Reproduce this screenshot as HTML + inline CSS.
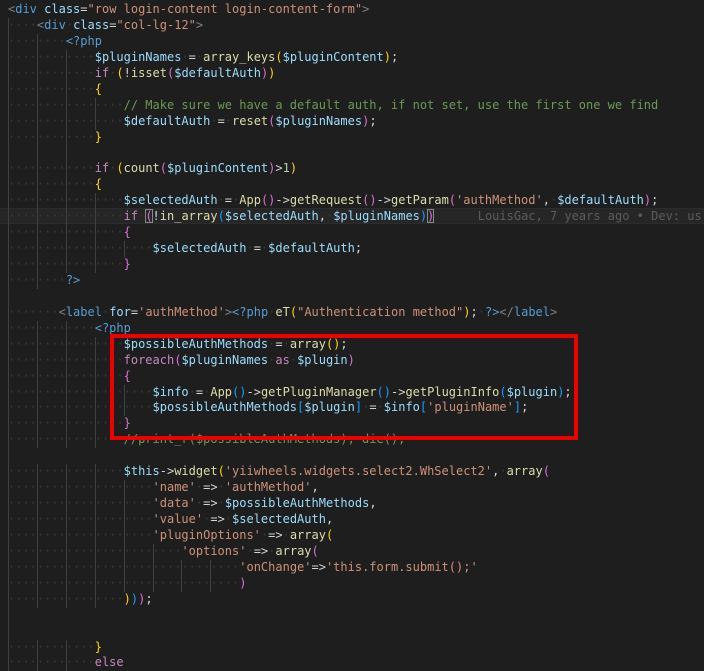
<!DOCTYPE html>
<html><head><meta charset="utf-8">
<style>
html,body{margin:0;padding:0;background:#1e1e1e;width:704px;height:663px;overflow:hidden}
#ed{position:absolute;left:8px;top:2px;font-family:"DejaVu Sans Mono","Liberation Mono",monospace;font-size:12px;line-height:15.95px;color:#d4d4d4}
.l{height:15.95px;position:relative;white-space:pre}
.g{display:inline-block;box-shadow:inset 1px 0 0 #404040;color:#3a3a3a}
.d{color:#3a3a3a}
.t{color:#808080}.tn{color:#569cd6}.a{color:#9cdcfe}.s{color:#ce9178}.v{color:#9cdcfe}.f{color:#dcdcaa}.k{color:#c586c0}.p{color:#569cd6}.c{color:#6a9955}
.y{color:#ffd700}.m{color:#da70d6}.b{color:#179fff}
.bx{outline:1px solid #888;outline-offset:-1px}
.cur{position:absolute;left:0;top:208px;width:704px;height:16px;background:#262626;border-top:1px solid #2c2c2c;border-bottom:1px solid #2c2c2c;box-sizing:border-box}
.blame{color:#5c5c5c}
#red{position:absolute;left:110px;top:334px;width:468px;height:106px;border:4px solid #ee0000;box-sizing:border-box}
</style></head><body>
<div class="cur"></div>
<div id="ed">
<div class="l"><span class="t">&lt;</span><span class="tn">div</span> <span class="a">class</span>=<span class="s">"row login-content login-content-form"</span><span class="t">&gt;</span></div>
<div class="l"><span class="g">····</span><span class="t">&lt;</span><span class="tn">div</span><span class="d">·</span><span class="a">class</span>=<span class="s">"col-lg-12"</span><span class="t">&gt;</span></div>
<div class="l"><span class="g">····</span><span class="g">····</span><span class="p">&lt;?php</span></div>
<div class="l"><span class="g">····</span><span class="g">····</span><span class="g">····</span><span class="v">$pluginNames</span><span class="d">·</span>=<span class="d">·</span><span class="f">array_keys</span><span class="y">(</span><span class="v">$pluginContent</span><span class="y">)</span>;</div>
<div class="l"><span class="g">····</span><span class="g">····</span><span class="g">····</span><span class="k">if</span><span class="d">·</span><span class="y">(</span>!<span class="f">isset</span><span class="m">(</span><span class="v">$defaultAuth</span><span class="m">)</span><span class="y">)</span></div>
<div class="l"><span class="g">····</span><span class="g">····</span><span class="g">····</span><span class="y">{</span></div>
<div class="l"><span class="g">····</span><span class="g">····</span><span class="g">····</span><span class="g">····</span><span class="c">// Make sure we have a default auth, if not set, use the first one we find</span></div>
<div class="l"><span class="g">····</span><span class="g">····</span><span class="g">····</span><span class="g">····</span><span class="v">$defaultAuth</span><span class="d">·</span>=<span class="d">·</span><span class="f">reset</span><span class="m">(</span><span class="v">$pluginNames</span><span class="m">)</span>;</div>
<div class="l"><span class="g">····</span><span class="g">····</span><span class="g">····</span><span class="y">}</span></div>
<div class="l"><span class="g">    </span><span class="g">    </span><span class="g">    </span></div>
<div class="l"><span class="g">····</span><span class="g">····</span><span class="g">····</span><span class="k">if</span><span class="d">·</span><span class="y">(</span><span class="f">count</span><span class="m">(</span><span class="v">$pluginContent</span><span class="m">)</span>&gt;<span style="color:#b5cea8">1</span><span class="y">)</span></div>
<div class="l"><span class="g">····</span><span class="g">····</span><span class="g">····</span><span class="y">{</span></div>
<div class="l"><span class="g">····</span><span class="g">····</span><span class="g">····</span><span class="g">····</span><span class="v">$selectedAuth</span><span class="d">·</span>=<span class="d">·</span><span class="f">App</span><span class="m">()</span>-&gt;<span class="f">getRequest</span><span class="m">()</span>-&gt;<span class="f">getParam</span><span class="m">(</span><span class="s">'authMethod'</span>,<span class="d">·</span><span class="v">$defaultAuth</span><span class="m">)</span>;</div>
<div class="l"><span class="g">····</span><span class="g">····</span><span class="g">····</span><span class="g">····</span><span class="k">if</span><span class="d">·</span><span class="m bx">(</span>!<span class="f">in_array</span><span class="b">(</span><span class="v">$selectedAuth</span>,<span class="d">·</span><span class="v">$pluginNames</span><span class="b">)</span><span class="m bx">)</span><span class="blame">      LouisGac, 7 years ago • Dev: us</span></div>
<div class="l"><span class="g">····</span><span class="g">····</span><span class="g">····</span><span class="g">····</span><span class="m">{</span></div>
<div class="l"><span class="g">····</span><span class="g">····</span><span class="g">····</span><span class="g">····</span><span class="g">····</span><span class="v">$selectedAuth</span><span class="d">·</span>=<span class="d">·</span><span class="v">$defaultAuth</span>;</div>
<div class="l"><span class="g">····</span><span class="g">····</span><span class="g">····</span><span class="g">····</span><span class="m">}</span></div>
<div class="l"><span class="g">····</span><span class="g">····</span><span class="p">?&gt;</span></div>
<div class="l"><span class="g">    </span></div>
<div class="l"><span class="g">····</span><span class="d">···</span><span class="t">&lt;</span><span class="tn">label</span><span class="d">·</span><span class="a">for</span>=<span class="s">'authMethod'</span><span class="t">&gt;</span><span class="p">&lt;?php</span><span class="d">·</span><span class="f">eT</span><span class="y">(</span><span class="s">"Authentication method"</span><span class="y">)</span>;<span class="d">·</span><span class="p">?&gt;</span><span class="t">&lt;/</span><span class="tn">label</span><span class="t">&gt;</span></div>
<div class="l"><span class="g">····</span><span class="g">····</span><span class="g">····</span><span class="p">&lt;?php</span></div>
<div class="l"><span class="g">····</span><span class="g">····</span><span class="g">····</span><span class="g">····</span><span class="v">$possibleAuthMethods</span><span class="d">·</span>=<span class="d">·</span><span class="f">array</span><span class="y">()</span>;</div>
<div class="l"><span class="g">····</span><span class="g">····</span><span class="g">····</span><span class="g">····</span><span class="k">foreach</span><span class="m">(</span><span class="v">$pluginNames</span><span class="d">·</span><span class="k">as</span><span class="d">·</span><span class="v">$plugin</span><span class="m">)</span></div>
<div class="l"><span class="g">····</span><span class="g">····</span><span class="g">····</span><span class="g">····</span><span class="m">{</span></div>
<div class="l"><span class="g">····</span><span class="g">····</span><span class="g">····</span><span class="g">····</span><span class="g">····</span><span class="v">$info</span><span class="d">·</span>=<span class="d">·</span><span class="f">App</span><span class="b">()</span>-&gt;<span class="f">getPluginManager</span><span class="b">()</span>-&gt;<span class="f">getPluginInfo</span><span class="b">(</span><span class="v">$plugin</span><span class="b">)</span>;</div>
<div class="l"><span class="g">····</span><span class="g">····</span><span class="g">····</span><span class="g">····</span><span class="g">····</span><span class="v">$possibleAuthMethods</span><span class="b">[</span><span class="v">$plugin</span><span class="b">]</span><span class="d">·</span>=<span class="d">·</span><span class="v">$info</span><span class="b">[</span><span class="s">'pluginName'</span><span class="b">]</span>;</div>
<div class="l"><span class="g">····</span><span class="g">····</span><span class="g">····</span><span class="g">····</span><span class="m">}</span></div>
<div class="l"><span class="g">····</span><span class="g">····</span><span class="g">····</span><span class="g">····</span><span class="c">//print_r($possibleAuthMethods); die();</span></div>
<div class="l"><span class="g">    </span></div>
<div class="l"><span class="g">····</span><span class="g">····</span><span class="g">····</span><span class="g">····</span><span class="v">$this</span>-&gt;<span class="f">widget</span><span class="y">(</span><span class="s">'yiiwheels.widgets.select2.WhSelect2'</span>,<span class="d">·</span><span class="f">array</span><span class="m">(</span></div>
<div class="l"><span class="g">····</span><span class="g">····</span><span class="g">····</span><span class="g">····</span><span class="g">····</span><span class="s">'name'</span><span class="d">·</span>=&gt;<span class="d">·</span><span class="s">'authMethod'</span>,</div>
<div class="l"><span class="g">····</span><span class="g">····</span><span class="g">····</span><span class="g">····</span><span class="g">····</span><span class="s">'data'</span><span class="d">·</span>=&gt;<span class="d">·</span><span class="v">$possibleAuthMethods</span>,</div>
<div class="l"><span class="g">····</span><span class="g">····</span><span class="g">····</span><span class="g">····</span><span class="g">····</span><span class="s">'value'</span><span class="d">·</span>=&gt;<span class="d">·</span><span class="v">$selectedAuth</span>,</div>
<div class="l"><span class="g">····</span><span class="g">····</span><span class="g">····</span><span class="g">····</span><span class="g">····</span><span class="s">'pluginOptions'</span><span class="d">·</span>=&gt;<span class="d">·</span><span class="f">array</span><span class="y">(</span></div>
<div class="l"><span class="g">····</span><span class="g">····</span><span class="g">····</span><span class="g">····</span><span class="g">····</span><span class="g">····</span><span class="s">'options'</span><span class="d">·</span>=&gt;<span class="d">·</span><span class="f">array</span><span class="m">(</span></div>
<div class="l"><span class="g">····</span><span class="g">····</span><span class="g">····</span><span class="g">····</span><span class="g">····</span><span class="g">····</span><span class="g">····</span><span class="g">····</span><span class="s">'onChange'</span>=&gt;<span class="s">'this.form.submit();'</span></div>
<div class="l"><span class="g">····</span><span class="g">····</span><span class="g">····</span><span class="g">····</span><span class="g">····</span><span class="g">····</span><span class="g">····</span><span class="g">····</span><span class="m">)</span></div>
<div class="l"><span class="g">····</span><span class="g">····</span><span class="g">····</span><span class="g">····</span><span class="y">)</span><span class="b">)</span><span class="m">)</span>;</div>
<div class="l"><span class="g">    </span></div>
<div class="l"><span class="g">    </span></div>
<div class="l"><span class="g">····</span><span class="g">····</span><span class="g">····</span><span class="y">}</span></div>
<div class="l"><span class="g">····</span><span class="g">····</span><span class="g">····</span><span class="k">else</span></div>
</div>
<div id="red"></div>
</body></html>
